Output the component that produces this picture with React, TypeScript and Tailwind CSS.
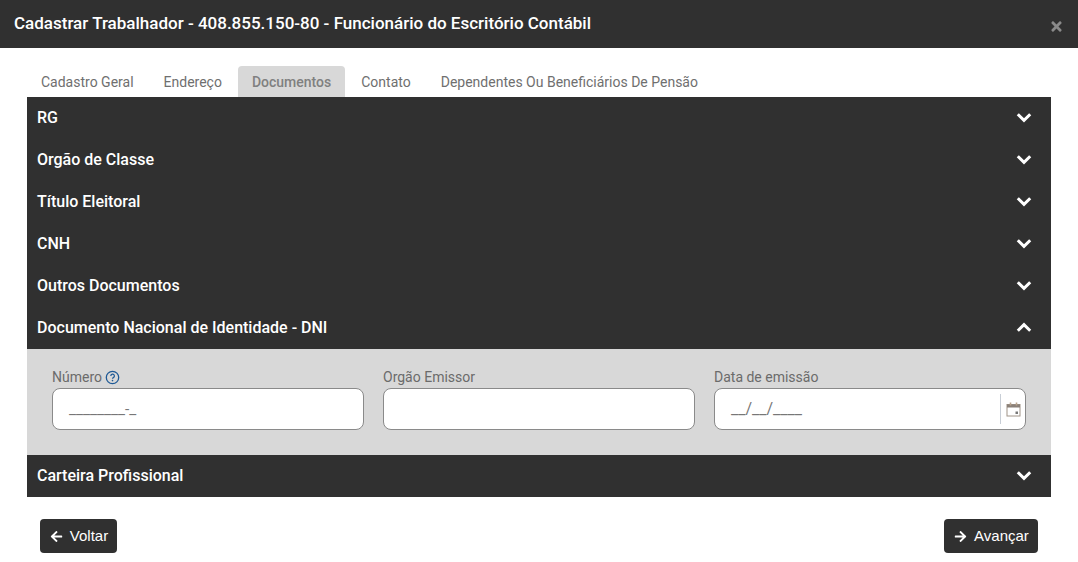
import { FaArrowLeft, FaArrowRight, FaTimes } from 'react-icons/fa';

const TOP_SECTIONS = ['RG', 'Orgão de Classe', 'Título Eleitoral', 'CNH', 'Outros Documentos'];
const TABS = ['Cadastro Geral', 'Endereço', 'Documentos', 'Contato', 'Dependentes Ou Beneficiários De Pensão'];

function Chevron({ up = false }: { up?: boolean }) {
  return (
    <svg width="16" height="11" viewBox="0 0 16 11" fill="none" className="mb-[1px]">
      <path
        d={up ? 'M1.8 8.8 8 2.6l6.2 6.2' : 'M1.8 2.2 8 8.4l6.2-6.2'}
        stroke="#fff"
        strokeWidth="3"
      />
    </svg>
  );
}

function SectionHeader({ title, open = false }: { title: string; open?: boolean }) {
  return (
    <div className="flex h-[42px] items-center justify-between bg-[#303030] pl-[10px] pr-[19px] text-white">
      <span className="text-[16px] font-medium">{title}</span>
      <Chevron up={open} />
    </div>
  );
}

function FieldLabel({ children }: { children: React.ReactNode }) {
  return (
    <div className="-mt-[1px] mb-[1px] flex h-[20px] items-center gap-[3px] text-[14px] leading-[20px] text-[#6b6b6b]">
      {children}
    </div>
  );
}

export default function App() {
  return (
    <div className="h-[562px] w-[1078px] overflow-hidden bg-white font-['Roboto',sans-serif]">
      <header className="flex h-[48px] items-center justify-between bg-[#303030] pl-[14px] pr-[14px]">
        <h1 className="text-[17px] font-medium text-white">
          Cadastrar Trabalhador - 408.855.150-80 - Funcionário do Escritório Contábil
        </h1>
        <FaTimes size={15} className="mt-[4px] text-[#8a8a8a]" />
      </header>

      <div className="px-[27px] pt-[18px]">
        <nav className="flex h-[31px]">
          {TABS.map((tab) => (
            <div
              key={tab}
              className={
                tab === 'Documentos'
                  ? 'mr-[2px] flex items-center rounded-t-[4px] bg-[#d8d8d8] px-[14px] pt-[1px] text-[14px] font-medium text-[#808080]'
                  : 'mr-[2px] flex items-center px-[14px] pt-[1px] text-[14px] text-[#6f6f6f]'
              }
            >
              {tab}
            </div>
          ))}
        </nav>

        <div>
          {TOP_SECTIONS.map((title) => (
            <SectionHeader key={title} title={title} />
          ))}
          <SectionHeader title="Documento Nacional de Identidade - DNI" open />

          <div className="grid h-[106px] grid-cols-3 gap-[19px] bg-[#d8d8d8] px-[25px] pt-[19px]">
            <div>
              <FieldLabel>
                Número
                <svg width="15" height="15" viewBox="0 0 15 15" fill="none">
                  <circle cx="7.5" cy="7.5" r="6.2" stroke="#1f5a96" strokeWidth="1.3" />
                  <path d="M5.8 6a1.8 1.8 0 1 1 2.6 1.6c-.6.3-.9.6-.9 1.2" stroke="#1f5a96" strokeWidth="1.2" />
                  <circle cx="7.5" cy="10.6" r=".8" fill="#1f5a96" />
                </svg>
              </FieldLabel>
              <div className="h-[42px] rounded-[8px] border border-[#8a8a8a] bg-white pl-[16px] text-[15.5px] leading-[40px] text-[#777]">
                ________-_
              </div>
            </div>
            <div>
              <FieldLabel>Orgão Emissor</FieldLabel>
              <div className="h-[42px] rounded-[8px] border border-[#8a8a8a] bg-white" />
            </div>
            <div>
              <FieldLabel>Data de emissão</FieldLabel>
              <div className="flex h-[42px] items-center justify-between rounded-[8px] border border-[#8a8a8a] bg-white pl-[16px] pr-[4px] text-[16px] text-[#777]">
                <span>__/__/____</span>
                <div className="flex h-[30px] items-center border-l border-[#c8ced6] pl-[5px]">
                  <svg width="15" height="15" viewBox="0 0 15 15" fill="none">
                    <rect x="1" y="2.5" width="13" height="11.5" stroke="#a09488" />
                    <rect x="1" y="2.5" width="13" height="3" fill="#8a8078" />
                    <path d="M4.5 .5v3M10.5 .5v3" stroke="#b8a48e" strokeWidth="1.6" />
                    <rect x="9.5" y="9.5" width="2.5" height="2.5" fill="#777" />
                  </svg>
                </div>
              </div>
            </div>
          </div>

          <SectionHeader title="Carteira Profissional" />
        </div>

        <footer className="flex justify-between px-[13px] pt-[22px] font-['Liberation_Sans',sans-serif]">
          <button className="flex h-[34px] w-[77px] items-center justify-center gap-[7px] rounded-[4px] bg-[#303030] pl-[1px] text-[15px] text-white">
            <FaArrowLeft size={13} />
            Voltar
          </button>
          <button className="flex h-[34px] w-[94px] items-center justify-center gap-[7px] rounded-[4px] bg-[#303030] pl-[1px] text-[15px] text-white">
            <FaArrowRight size={13} />
            Avançar
          </button>
        </footer>
      </div>
    </div>
  );
}
